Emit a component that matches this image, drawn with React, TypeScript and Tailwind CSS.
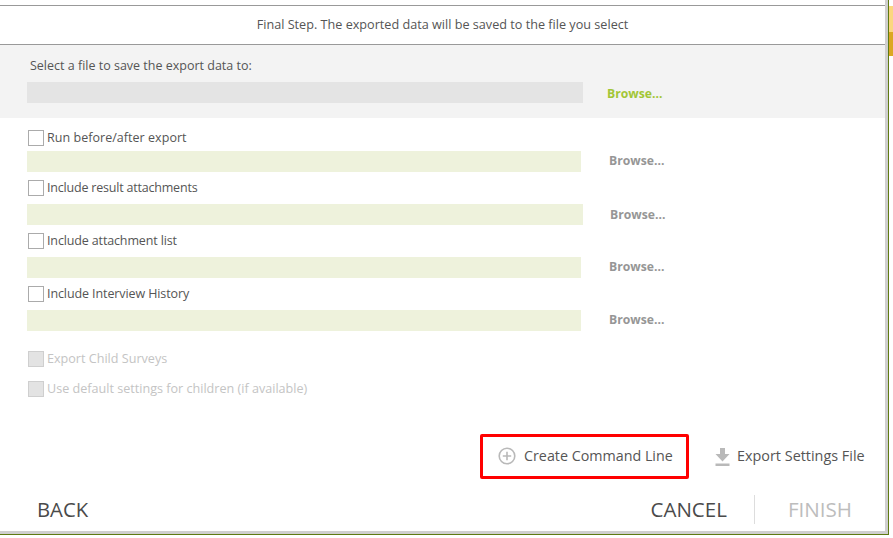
type OptionRow = {
  label: string;
  fieldWidth: string;
  browseClass: string;
  top: string;
  fieldTop: string;
  labelClass?: string;
};

const optionRows: OptionRow[] = [
  { label: "Run before/after export", fieldWidth: "w-[554px]", browseClass: "ml-[28px]", top: "mt-[12px]", fieldTop: "mt-[5px]", labelClass: "tracking-[0.04px]" },
  { label: "Include result attachments", fieldWidth: "w-[556px]", browseClass: "ml-[27px] mt-[1px]", top: "mt-[8px]", fieldTop: "mt-[8px]", labelClass: "tracking-[-0.2px]" },
  { label: "Include attachment list", fieldWidth: "w-[554px]", browseClass: "ml-[28px]", top: "mt-[8px]", fieldTop: "mt-[8px]", labelClass: "tracking-[-0.14px]" },
  { label: "Include Interview History", fieldWidth: "w-[554px]", browseClass: "ml-[28px]", top: "mt-[8px]", fieldTop: "mt-[8px]", labelClass: "tracking-[-0.1px]" },
];

function Checkbox({ label, disabled, labelClass }: { label: string; disabled?: boolean; labelClass?: string }) {
  return (
    <div className="flex items-center h-[16px] pl-[28px]">
      <span
        className={
          disabled
            ? "w-[16px] h-[16px] border border-[#cfcfcf] bg-[#e3e3e3]"
            : "w-[16px] h-[16px] border border-[#ababab] bg-white"
        }
      />
      <span className={`${disabled ? "text-[12.6px] text-[#c4c4c4]" : "text-[12.5px] text-[#555555]"} ml-[3px] ${labelClass ?? ""}`}>
        {label}
      </span>
    </div>
  );
}

export default function App() {
  return (
    <div className="w-[893px] h-[538px] flex bg-white overflow-hidden font-['Open_Sans',sans-serif]">
      <div className="w-[889px] h-[535px] flex flex-col border-r border-b border-[#5f7a12]">
        <div className="flex-1 flex flex-col border-r-[3px] border-b-[3px] border-[#cfcfcf] min-h-0">
          <div className="mt-[5px] h-[40px] pb-[2px] flex items-center justify-center border-y border-[#999999] text-[12.65px] text-[#555555]">
            Final Step. The exported data will be saved to the file you select
          </div>

          <div className="h-[73px] bg-[#f3f3f3] pl-[27px]">
            <p className="mt-[12px] ml-[3px] h-[17px] leading-[17px] text-[12.5px] text-[#555555]">
              Select a file to save the export data to:
            </p>
            <div className="mt-[8px] flex items-center">
              <div className="w-[556px] h-[21px] bg-[#e4e4e4]" />
              <span className="ml-[24px] mt-[3px] text-[12.2px] font-bold text-[#a2c636]">Browse...</span>
            </div>
          </div>

          {optionRows.map((row) => (
            <div key={row.label} className={row.top}>
              <Checkbox label={row.label} labelClass={row.labelClass} />
              <div className={`${row.fieldTop} flex items-center pl-[27px]`}>
                <div className={`${row.fieldWidth} h-[21px] bg-[#eef2dc]`} />
                <span className={`${row.browseClass} text-[12.2px] font-bold text-[#969696]`}>Browse...</span>
              </div>
            </div>
          ))}

          <div className="mt-[20px]">
            <Checkbox label="Export Child Surveys" disabled />
          </div>
          <div className="mt-[14px]">
            <Checkbox label="Use default settings for children (if available)" disabled />
          </div>

          <div className="mt-[37px] flex items-center pl-[480px]">
            <div className="w-[209px] h-[45px] flex items-center border-[3px] border-[#ff0000] pl-[15px] rounded-[2px]">
              <svg className="mb-[1px]" width="18" height="18" viewBox="0 0 18 18" fill="none" stroke="#b9b9b9" strokeWidth="1.6">
                <circle cx="9" cy="9" r="7.8" />
                <path d="M9 4.8v8.4M4.8 9h8.4" />
              </svg>
              <span className="ml-[8px] mb-[2px] text-[14.3px] text-[#555555] whitespace-nowrap">Create Command Line</span>
            </div>
            <svg className="ml-[26px]" width="15" height="18" viewBox="0 0 15 18" fill="#b9b9b9">
              <path d="M5 0h5v6h4.5L7.5 13.5 0.5 6H5z" />
              <rect x="0.5" y="15.5" width="14" height="2.5" />
            </svg>
            <span className="ml-[7px] mb-[2px] text-[14.4px] text-[#555555] whitespace-nowrap">Export Settings File</span>
          </div>

          <div className="mt-[16px] flex items-center h-[29px] pl-[37px]">
            <span className="text-[20.3px] text-[#4a4a4a]">BACK</span>
            <span className="ml-auto text-[20.5px] text-[#4a4a4a]">CANCEL</span>
            <span className="ml-[27px] w-px h-[29px] bg-[#dddddd]" />
            <span className="ml-[33px] mr-[33px] text-[20.6px] text-[#bdbdbd]">FINISH</span>
          </div>
        </div>
      </div>
      <div className="flex-1 flex flex-col">
        <div className="h-[6px]" />
        <div className="h-[26px] bg-[#fbd77e]" />
        <div className="h-[24px] bg-[#dba823]" />
      </div>
    </div>
  );
}
